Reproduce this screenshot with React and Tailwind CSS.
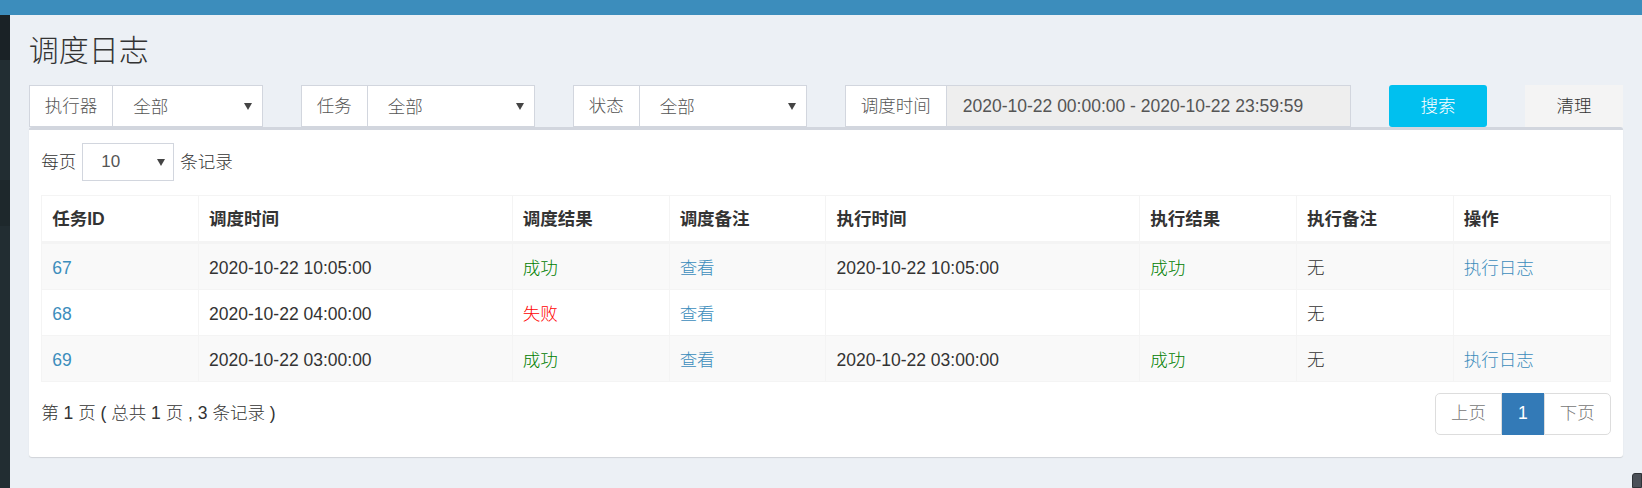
import React from 'react';

const font = { fontFamily: '"Liberation Sans", "Noto Sans CJK SC", sans-serif' };

const logs = [
    { id: '67', triggerTime: '2020-10-22 10:05:00', triggerOk: true, handleTime: '2020-10-22 10:05:00', handleOk: true },
    { id: '68', triggerTime: '2020-10-22 04:00:00', triggerOk: false, handleTime: '', handleOk: null },
    { id: '69', triggerTime: '2020-10-22 03:00:00', triggerOk: true, handleTime: '2020-10-22 03:00:00', handleOk: true },
];

function Caret() {
    return (
        <svg width="8" height="7" viewBox="0 0 8 7" className="shrink-0">
            <path d="M0 0H8L4 7Z" fill="#444" />
        </svg>
    );
}

function FilterSelect({ label }) {
    return (
        <div className="flex h-[42px] col-span-2 bg-white text-[#555]">
            <div className="flex items-center px-[15px] border border-[#d2d6de] whitespace-nowrap">{label}</div>
            <div className="flex flex-1 items-center justify-between pl-[20px] pr-[10px] border border-l-0 border-[#d2d6de]">
                <span className="pt-[2px]">全部</span>
                <Caret />
            </div>
        </div>
    );
}

function Th({ children, className }) {
    return (
        <th className={`text-left font-bold px-[10px] pt-[11px] pb-[9px] leading-[25px] border border-[#f4f4f4] border-b-[3px] ${className || ''}`}>
            {children}
        </th>
    );
}

function Td({ children, className }) {
    return <td className={`px-[10px] pt-[12px] pb-[8px] leading-[25px] border border-[#f4f4f4] ${className || ''}`}>{children}</td>;
}

export default function App() {
    return (
        <div className="relative min-h-[488px] flex flex-col bg-[#ecf0f5] text-[17.5px] font-light text-[#333]" style={font}>
            <div className="h-[15px] bg-[#3c8dbc]"></div>
            <div className="flex flex-1">
                <div className="w-[10px] flex flex-col bg-[#222d32]">
                    <div className="h-[45px] bg-[#1a2226]"></div>
                    <div className="h-[120px]"></div>
                    <div className="h-[46px] bg-[#1e282c]"></div>
                </div>
                <div className="flex-1 px-[18.75px]">
                    <div className="h-[70px] flex items-center">
                        <h1 className="text-[30px] leading-[33px] font-light text-[#333]">调度日志</h1>
                    </div>

                    <div className="grid grid-cols-12 gap-x-[37.5px]">
                        <FilterSelect label="执行器" />
                        <FilterSelect label="任务" />
                        <FilterSelect label="状态" />
                        <div className="flex h-[42px] col-span-4 text-[#555]">
                            <div className="flex items-center px-[15px] bg-white border border-[#d2d6de] whitespace-nowrap">调度时间</div>
                            <div className="flex flex-1 items-center pl-[16px] bg-[#eee] border border-l-0 border-[#d2d6de] whitespace-nowrap">
                                2020-10-22 00:00:00 - 2020-10-22 23:59:59
                            </div>
                        </div>
                        <button className="col-span-1 h-[42px] rounded-[3px] bg-[#00c0ef] text-white">搜索</button>
                        <button className="col-span-1 h-[42px] bg-[#f4f4f4] text-[#333]">清理</button>
                    </div>

                    <div className="bg-white border-t-[3.75px] border-[#d2d6de] rounded-[3px] shadow-[0_1px_1px_rgba(0,0,0,0.12)] px-[12.5px] pt-[13px] pb-[22px]">
                        <div className="flex items-center h-[38px]">
                            <span>每页</span>
                            <div className="ml-[6px] mr-[6px] flex items-center justify-between w-[92px] h-[38px] pl-[18px] pr-[8px] border border-[#d2d6de] text-[#555]">
                                <span className="text-[17px]">10</span>
                                <Caret />
                            </div>
                            <span>条记录</span>
                        </div>

                        <table className="w-full mt-[14px] border-collapse border border-[#f4f4f4] table-fixed">
                            <thead>
                                <tr>
                                    <Th className="w-[10%]">任务ID</Th>
                                    <Th className="w-[20%]">调度时间</Th>
                                    <Th className="w-[10%]">调度结果</Th>
                                    <Th className="w-[10%]">调度备注</Th>
                                    <Th className="w-[20%]">执行时间</Th>
                                    <Th className="w-[10%]">执行结果</Th>
                                    <Th className="w-[10%]">执行备注</Th>
                                    <Th className="w-[10%]">操作</Th>
                                </tr>
                            </thead>
                            <tbody>
                                {logs.map((log, i) => (
                                    <tr key={log.id} className={i % 2 === 0 ? 'bg-[#f9f9f9]' : 'bg-white'}>
                                        <Td className="text-[#3c8dbc]">{log.id}</Td>
                                        <Td>{log.triggerTime}</Td>
                                        <Td className={log.triggerOk ? 'text-[#008000]' : 'text-[#ff0000]'}>{log.triggerOk ? '成功' : '失败'}</Td>
                                        <Td className="text-[#3c8dbc]">查看</Td>
                                        <Td>{log.handleTime}</Td>
                                        <Td className="text-[#008000]">{log.handleOk ? '成功' : ''}</Td>
                                        <Td>无</Td>
                                        <Td className="text-[#3c8dbc]">{log.handleOk ? '执行日志' : ''}</Td>
                                    </tr>
                                ))}
                            </tbody>
                        </table>

                        <div className="flex justify-between items-start mt-[10.5px]">
                            <div className="pt-[8px] leading-[25px]">第 1 页 ( 总共 1 页 , 3 条记录 )</div>
                            <div className="flex h-[42px] leading-[25px]">
                                <span className="flex items-center px-[15px] border border-[#ddd] rounded-l-[5px] text-[#777]">上页</span>
                                <span className="flex items-center px-[15px] bg-[#337ab7] border border-[#337ab7] text-white">1</span>
                                <span className="flex items-center px-[15px] border border-[#ddd] rounded-r-[5px] text-[#777]">下页</span>
                            </div>
                        </div>
                    </div>
                </div>
            </div>
            <div className="absolute right-0 top-[473px] w-[10px] h-[15px] rounded-tl-[3px] bg-[#4b5058] border border-[#2f3338]"></div>
        </div>
    );
}
